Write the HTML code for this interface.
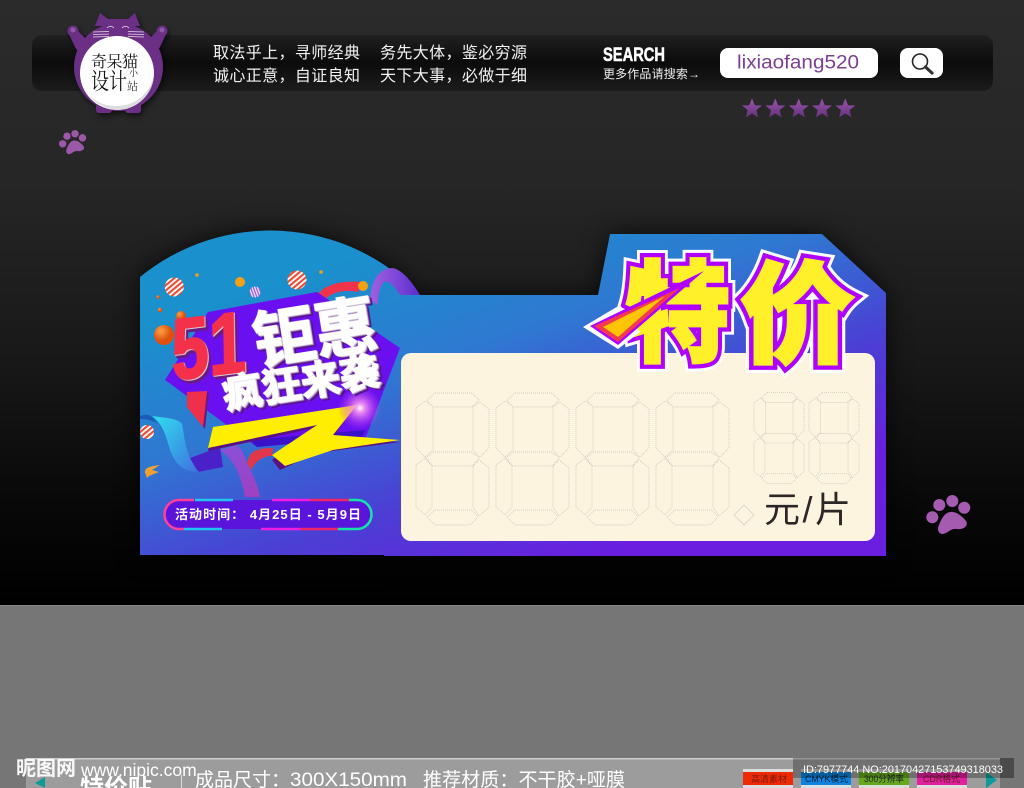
<!DOCTYPE html>
<html><head><meta charset="utf-8"><style>
html,body{margin:0;padding:0;background:#000;width:1024px;height:788px;overflow:hidden}
svg{display:block}
text{font-family:"Liberation Sans","Noto Sans CJK SC",sans-serif}
.s{font-family:"Liberation Serif","Noto Serif CJK SC",serif}
.w{fill:#fff;stroke:#fff;stroke-width:1.5;font-weight:700;filter:drop-shadow(1px 1px 0 #c4c0d4) drop-shadow(1px 1px 0 #7a2a98) drop-shadow(1px 1px 0 #4a1080)}
</style></head><body>
<svg width="1024" height="788" viewBox="0 0 1024 788" xmlns="http://www.w3.org/2000/svg">
<defs>
<linearGradient id="bg" x1="0" y1="0" x2="0" y2="1"><stop offset="0" stop-color="#2b2b2b"/><stop offset=".3" stop-color="#262626"/><stop offset=".6" stop-color="#181818"/><stop offset=".85" stop-color="#070707"/><stop offset="1" stop-color="#000"/></linearGradient>
<linearGradient id="bar" x1="0" y1="0" x2="0" y2="1"><stop offset="0" stop-color="#202020"/><stop offset=".5" stop-color="#0b0b0b"/><stop offset="1" stop-color="#1c1c1c"/></linearGradient>
<linearGradient id="card" gradientUnits="userSpaceOnUse" x1="440" y1="225" x2="560" y2="570"><stop offset="0" stop-color="#1a90cc"/><stop offset=".35" stop-color="#2f78d2"/><stop offset=".68" stop-color="#4a40d4"/><stop offset="1" stop-color="#6a1ee0"/></linearGradient>
<linearGradient id="rib" x1="0" y1="0" x2="1" y2="1"><stop offset="0" stop-color="#2fe0ee"/><stop offset="1" stop-color="#3f70e0"/></linearGradient>
<linearGradient id="pur" x1="0" y1="0" x2="1" y2="0"><stop offset="0" stop-color="#a060e0"/><stop offset=".5" stop-color="#8048d8"/><stop offset="1" stop-color="#5a2cd0"/></linearGradient>
<linearGradient id="pur2" x1="0" y1="0" x2="0" y2="1"><stop offset="0" stop-color="#8a50d8"/><stop offset="1" stop-color="#a040c0"/></linearGradient>
<linearGradient id="star" x1="0" y1="0" x2="0" y2="1"><stop offset="0" stop-color="#9a55b0"/><stop offset="1" stop-color="#653078"/></linearGradient>
<radialGradient id="flare"><stop offset="0" stop-color="#fff"/><stop offset=".2" stop-color="#ff9cf0" stop-opacity=".9"/><stop offset="1" stop-color="#c030f0" stop-opacity="0"/></radialGradient>
<radialGradient id="ob" cx=".35" cy=".3"><stop offset="0" stop-color="#ffa040"/><stop offset="1" stop-color="#e0500f"/></radialGradient>
<pattern id="st" width="4" height="4" patternUnits="userSpaceOnUse" patternTransform="rotate(-40)"><rect width="4" height="4" fill="#fff"/><rect width="4" height="2.2" fill="#e8503a"/></pattern>
<pattern id="sp" width="2.6" height="2.6" patternUnits="userSpaceOnUse" patternTransform="rotate(70)"><rect width="2.6" height="2.6" fill="#efe4fa"/><rect width="2.6" height="1.3" fill="#9a5ce0"/></pattern>
<g id="dg" fill="#fdf4e0" stroke="#c4bfb0" stroke-width=".7" stroke-dasharray="1 1">
<path vector-effect="non-scaling-stroke" d="M19 1H56L63 8L56 15H17L11 8Z"/>
<path vector-effect="non-scaling-stroke" d="M0 16L9 9L17 15V58L9 65L0 56Z"/>
<path vector-effect="non-scaling-stroke" d="M57 15L64 10L73 17V56L64 65L57 58Z"/>
<path vector-effect="non-scaling-stroke" d="M17 60H56L63 66L56 74H17L10 66Z"/>
<path vector-effect="non-scaling-stroke" d="M0 73L9 66L16 74V115L9 123L0 115Z"/>
<path vector-effect="non-scaling-stroke" d="M57 74L63 68L73 76V115L63 124L57 115Z"/>
<path vector-effect="non-scaling-stroke" d="M19 118H56L62 125L54 133H19L11 125Z"/>
</g>
<g id="paw"><circle cx="932.300" cy="517.300" r="6"/><circle cx="939.300" cy="505" r="6"/><circle cx="952.300" cy="501" r="6"/><circle cx="964.300" cy="507.700" r="6"/>
<path d="M950 512C956 511 962 516 966 521C969 526 963 530 957 529C951 528 948 533 943 534C938 534 937 529 939 525C941 520 944 513 950 512Z"/></g>
<polygon id="star5" points="0,-10 2.8,-3.2 10,-3 4.4,1.6 6.2,9 0,5 -6.2,9 -4.4,1.6 -10,-3 -2.8,-3.2"/>
</defs>

<rect width="1024" height="605" fill="url(#bg)"/>
<!-- header bar -->
<rect x="32" y="35" width="961" height="56" rx="10" fill="url(#bar)"/>
<text x="213" y="58" font-size="16" fill="#f2f2f2" textLength="147">取法乎上，寻师经典</text>
<text x="213" y="81" font-size="16" fill="#f2f2f2" textLength="147">诚心正意，自证良知</text>
<text x="380" y="58" font-size="16" fill="#f2f2f2" textLength="147">务先大体，鉴必穷源</text>
<text x="380" y="81" font-size="16" fill="#f2f2f2" textLength="147">天下大事，必做于细</text>
<text x="603" y="61" font-size="19" font-weight="700" fill="#fff" textLength="62" lengthAdjust="spacingAndGlyphs" stroke="#fff" stroke-width=".5">SEARCH</text>
<text x="603" y="78" font-size="12" fill="#eee" textLength="97">更多作品请搜索→</text>
<rect x="720" y="48" width="158" height="30" rx="8" fill="#fff"/>
<text x="737" y="68.500" font-size="19" fill="#7d3f90" textLength="122" lengthAdjust="spacingAndGlyphs">lixiaofang520</text>
<rect x="900" y="48" width="43" height="30" rx="8" fill="#fff"/>
<circle cx="920" cy="61.500" r="7.500" fill="none" stroke="#222" stroke-width="1.6"/>
<path d="M925.500 67L932 73" stroke="#333" stroke-width="3.2" stroke-linecap="round"/>
<g fill="url(#star)">
<use href="#star5" x="752" y="108.500"/><use href="#star5" x="775.300" y="108.500"/><use href="#star5" x="798.700" y="108.500"/><use href="#star5" x="822" y="108.500"/><use href="#star5" x="845.300" y="108.500"/>
</g>
<!-- cat logo -->
<g fill="#6b2f86" style="filter:drop-shadow(2px 3px 3px rgba(0,0,0,.55))">
<circle cx="73" cy="31" r="5.500"/><circle cx="162" cy="31" r="5.500"/>
<path d="M68 32L78 31L87 40L79 53L75 47Z"/>
<path d="M167 32L157 31L148 40L156 53L160 47Z"/>
<path d="M95 26L100 13L108 19H128L135 13L140 26Z"/>
<ellipse cx="118.500" cy="67" rx="44.500" ry="44"/>
<rect x="96" y="100" width="16" height="13" rx="3"/><rect x="125" y="100" width="16" height="13" rx="3"/>
</g>
<circle cx="73" cy="30" r="2.500" fill="#8f5aa6"/><circle cx="162" cy="30" r="2.500" fill="#8f5aa6"/>
<g fill="none" stroke="#e8d8ee" stroke-width=".8">
<path d="M107 28Q110.500 24.500 114 28M122 28Q125.500 24.500 129 28"/>
<path d="M93 32L109 31.500M93 34.500L109 34M93 37L109 36.500M128 31.500L144 32M128 34L144 34.500M128 36.500L144 37"/>
</g>
<circle cx="117" cy="73" r="37" fill="#fff"/>
<path d="M117 110A37 37 0 0 0 154 73A37 37 0 0 1 117 106A37 37 0 0 1 90 96A37 37 0 0 0 117 110Z" fill="#ddd"/>
<text class="s" x="91" y="67" font-size="16" fill="#111" textLength="47">奇呆猫</text>
<text class="s" x="91" y="89" font-size="23" fill="#111" textLength="36" lengthAdjust="spacingAndGlyphs">设计</text>
<text class="s" x="129" y="76" font-size="9" fill="#222">小</text>
<text class="s" x="127" y="90" font-size="11" fill="#222">站</text>
<use href="#paw" fill="#9b57a8" transform="translate(73 143) scale(.62) translate(-949 -516)"/>
<use href="#paw" fill="#a45bb0"/>

<!-- card -->
<path d="M140 277A206 206 0 0 1 420 295H598L610 234H822L886 293V556H384V555H140Z" fill="url(#card)" style="filter:drop-shadow(0 0 12px rgba(0,0,0,.75))"/>
<!-- ribbons back -->
<path d="M370 300C372 280 378 269 392 268C402 269 412 282 420 295H400C394 285 388 280 384 282C380 285 378 295 378 305Z" fill="url(#pur)"/>
<path d="M315 300C320 285 340 280 362 282L358 292C340 288 328 295 322 302Z" fill="#f0324a"/>
<!-- purple polygon -->
<polygon points="165,380 208,312 317,292 400,348 366,437 257,447" fill="#6a10f0"/>
<polygon points="250,440 366,430 362,437 257,447" fill="#3a10c8"/>
<!-- lower ribbons -->
<path d="M140 416C146 414 150 415 152 417L158 424C152 420 146 419 140 419Z" fill="#1a5ab8"/>
<path d="M190 458L220 447L223 467L198 472Z" fill="#4a20c8"/>
<path d="M152 416C165 418 178 418 182 424C185 440 186 458 199 472C185 472 176 466 170 450C166 436 163 424 152 416Z" fill="url(#rib)"/>
<path d="M220 450L237 445C243 450 245 458 247 463C253 475 258 485 260 497H245C243 485 240 478 237 470C233 462 227 455 220 450Z" fill="url(#pur2)"/>
<path d="M247 463C249 456 251 453 253 452C260 448 268 448 273 448L272 456C262 456 255 462 251 470Z" fill="#e0384a"/>
<path d="M146 475C142 468 150 466 160 465L152 470L159 472L149 476L147 478Z" fill="#f0a030"/>
<!-- balls -->
<circle cx="174.300" cy="287" r="9.500" fill="url(#st)"/>
<circle cx="297" cy="280" r="9.500" fill="url(#st)"/>
<circle cx="147" cy="432" r="7" fill="url(#st)"/>
<circle cx="255" cy="292" r="5.500" fill="url(#sp)"/>
<g fill="#f5a010"><circle cx="240" cy="282" r="5"/><circle cx="363" cy="286" r="5"/><circle cx="197" cy="275" r="1.800"/><circle cx="321" cy="272" r="1.800"/></g>
<g fill="url(#ob)"><circle cx="164" cy="335" r="10"/><circle cx="181" cy="316" r="5"/><circle cx="158" cy="297" r="1.800"/><circle cx="160" cy="310" r="2.200"/></g>
<!-- Z -->
<path d="M213 430L353 408L333 438L400 442L317 453L280 470L272 460L315 428L208 451Z" fill="#5a1080"/>
<path d="M213 427L357 405L333 435L400 440L333 450L285 466L272 455L317 425L208 448Z" fill="#ffee00"/>
<circle cx="360" cy="408" r="22" fill="url(#flare)"/>
<!-- 51 -->
<text transform="translate(172 380) rotate(-7) skewX(-6)" font-size="86" font-weight="700" fill="#f5304a" stroke="#f5304a" stroke-width="2" textLength="75" lengthAdjust="spacingAndGlyphs" style="filter:drop-shadow(1px 1px 0 #d8d0d0) drop-shadow(2px 3px 0 #6a1a80)">51</text>
<polygon points="187,392 207,391 203,427 187,407" fill="#f0304a" style="filter:drop-shadow(2px 2px 0 #6a1a80)"/>
<!-- slogans -->
<text class="w" transform="translate(257 364) rotate(-9)" font-size="62" textLength="124" lengthAdjust="spacingAndGlyphs">钜惠</text>
<text class="w" transform="translate(225 409) rotate(-9)" font-size="39" textLength="158" lengthAdjust="spacingAndGlyphs">疯狂来袭</text>
<!-- pill -->
<rect x="164.500" y="500" width="207" height="29" rx="14.500" fill="#5a14dc"/>
<path d="M194 500H179A14.500 14.500 0 0 0 179 529H184" fill="none" stroke="#ff3f9a" stroke-width="2.600"/>
<path d="M195 500H233M184 529H222" stroke="#22c4f2" stroke-width="2.600"/>
<path d="M272 500H310M261 529H300" stroke="#ee1fe0" stroke-width="2.600"/>
<path d="M310 500H349M300 529H338" stroke="#f0246a" stroke-width="2.600"/>
<path d="M349 500H357A14.500 14.500 0 0 1 357 529H338" fill="none" stroke="#17e0a8" stroke-width="2.600"/>
<text x="175" y="519" font-size="13" font-weight="700" fill="#fff" textLength="186">活动时间： 4月25日 - 5月9日</text>

<!-- panel -->
<rect x="401" y="353" width="474" height="188" rx="10" fill="#fdf4e0"/>
<use href="#dg" x="416" y="392"/><use href="#dg" x="496" y="392"/><use href="#dg" x="576" y="392"/><use href="#dg" x="656" y="392"/>
<use href="#dg" transform="translate(754 392) scale(.685 .69)"/>
<use href="#dg" transform="translate(809 392) scale(.685 .69)"/>
<polygon points="744,505 754,515 744,525 734,515" fill="none" stroke="#d0cbbc" stroke-width=".7"/>
<text x="764" y="522" font-size="36" fill="#2c2626" textLength="87">元/片</text>

<!-- 特价 -->
<g font-weight="900" style="font-family:'Noto Sans CJK SC',sans-serif" font-size="110" stroke-linejoin="miter" stroke-miterlimit="2">
<text x="625" y="353" textLength="105" lengthAdjust="spacingAndGlyphs" fill="#fff" stroke="#fff" stroke-width="17">特</text>
<text x="740" y="354" textLength="115" lengthAdjust="spacingAndGlyphs" fill="#fff" stroke="#fff" stroke-width="17">价</text>
<text x="625" y="353" textLength="105" lengthAdjust="spacingAndGlyphs" fill="#b000ff" stroke="#b000ff" stroke-width="11">特</text>
<text x="740" y="354" textLength="115" lengthAdjust="spacingAndGlyphs" fill="#b000ff" stroke="#b000ff" stroke-width="11">价</text>
<text x="625" y="353" textLength="105" lengthAdjust="spacingAndGlyphs" fill="#fff02a" stroke="#fff02a" stroke-width="2.500">特</text>
<text x="740" y="354" textLength="115" lengthAdjust="spacingAndGlyphs" fill="#fff02a" stroke="#fff02a" stroke-width="2.500">价</text>
</g>
<!-- arrow -->
<polygon points="583,327 620,305 640,332 618,349" fill="#fff"/>
<polygon points="590,326 704,271 618,345" fill="#b000ff"/>
<polygon points="594,326 680,288 618,342" fill="#f53a50"/>
<polygon points="603,327 665,296 618,337" fill="#ffc400"/>
<polygon points="613,327 652,304 620,323" fill="#fff"/>

<!-- footer -->
<rect y="605" width="1024" height="183" fill="#767676"/>
<rect y="605" width="1024" height="1" fill="#888"/>
<rect x="26" y="758" width="974" height="30" fill="#9c9c9c"/>
<rect x="26" y="758" width="974" height="1.500" fill="#cfcfcf"/>
<polygon points="45,777 35,783 45,788" fill="#0f9a9a"/>
<text x="80" y="796" font-size="24" font-weight="700" fill="#fff" textLength="72">特价贴</text>
<rect x="181" y="775" width="1" height="13" fill="#ddd"/>
<text x="195" y="786" font-size="19" fill="#fff">成品尺寸：</text>
<text x="290" y="786" font-size="19" fill="#fff" textLength="117" lengthAdjust="spacingAndGlyphs">300X150mm</text>
<text x="423" y="786" font-size="19" fill="#fff" textLength="202">推荐材质：不干胶+哑膜</text>
<text x="16" y="775" font-size="20" font-weight="700" fill="#fff" textLength="60" opacity=".95">昵图网</text>
<text x="81" y="776" font-size="17.500" fill="#fff">www.nipic.com</text>
<rect x="743" y="769" width="50" height="4" fill="#ddd"/><rect x="801" y="769" width="50" height="4" fill="#ccc"/><rect x="859" y="769" width="50" height="4" fill="#ccc"/><rect x="917" y="769" width="50" height="4" fill="#ccc"/>
<rect x="743" y="772" width="50" height="13" fill="#ee2a06"/>
<rect x="801" y="772" width="50" height="13" fill="#0a84e0"/>
<rect x="859" y="772" width="50" height="13" fill="#64a81c"/>
<rect x="917" y="772" width="50" height="13" fill="#e0209c"/>
<rect x="743" y="785" width="50" height="3" fill="#ddd"/><rect x="801" y="785" width="50" height="3" fill="#ddd"/><rect x="859" y="785" width="50" height="3" fill="#ddd"/><rect x="917" y="785" width="50" height="3" fill="#ddd"/>
<g font-size="9"><text x="751" y="782" fill="#7a1a10" textLength="36" lengthAdjust="spacingAndGlyphs">高清素材</text><text x="805" y="782" fill="#123" textLength="43" lengthAdjust="spacingAndGlyphs">CMYK模式</text><text x="864" y="782" fill="#223" textLength="40" lengthAdjust="spacingAndGlyphs">300分辨率</text><text x="923" y="782" fill="#622" textLength="37" lengthAdjust="spacingAndGlyphs">CDR格式</text></g>
<polygon points="986,772 997,780 986,788" fill="#0f9a9a"/>
<rect x="793" y="758" width="221" height="20" fill="#000" opacity=".28"/>
<rect x="1000" y="758" width="14" height="20" fill="#000" opacity=".12"/>
<text x="803" y="773" font-size="11" fill="#fff" textLength="200" lengthAdjust="spacingAndGlyphs">ID:7977744 NO:20170427153749318033</text>
</svg>
</body></html>
